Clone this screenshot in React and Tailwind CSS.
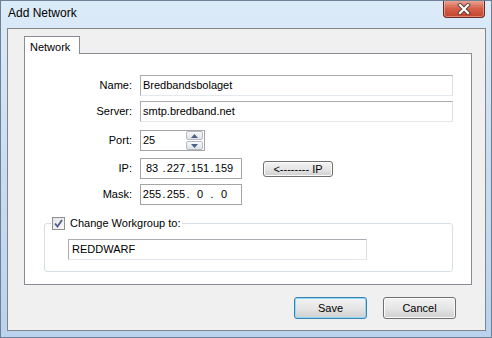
import React from 'react';

const font = { fontFamily: '"Liberation Sans", Arial, sans-serif' };

const Field = ({ value, className = '' }) => (
  <div className={`h-[21px] border border-[#abadb3] border-r-[#dbdfe6] border-b-[#e3e9ef] bg-white flex items-center pl-[2px] text-[11px] text-black ${className}`}>
    {value}
  </div>
);

const Label = ({ children }) => (
  <div className="w-[108px] text-right text-[11px] text-black pr-[1px]">{children}</div>
);

const IpBox = ({ parts }) => (
  <div className="w-[102px] h-[21px] border border-[#a5a5a5] bg-white flex items-center pl-[1px] text-[11px] text-black">
    {parts.map((p, i) => (
      <React.Fragment key={i}>
        {i > 0 && <span className="w-[4px] text-center">.</span>}
        <span className="w-[20px] text-center">{p}</span>
      </React.Fragment>
    ))}
  </div>
);

const Button = ({ children, focused, className = '' }) => (
  <button
    className={`rounded-[3px] border text-[11px] text-black bg-linear-to-b from-[#f3f3f3] via-[#e6e6e6] to-[#cfcfcf] ${
      focused ? 'border-[#3c7fb1] shadow-[inset_0_0_0_1px_#8fdcf8]' : 'border-[#707070] shadow-[inset_0_0_0_1px_#fbfbfb]'
    } ${className}`}
  >
    {children}
  </button>
);

const Spinner = () => (
  <div className="ml-auto mr-[1px] w-[17px] h-[19px] flex flex-col gap-[1px]">
    {[0, 1].map(i => (
      <div key={i} className="flex-1 border border-[#b5bac2] rounded-[2px] bg-linear-to-b from-[#f7f8fa] to-[#dfe3ea] flex items-center justify-center">
        <svg width="7" height="4" viewBox="0 0 7 4">
          {i === 0 ? <path d="M0 4 L3.5 0 L7 4 Z" fill="#4d6185" /> : <path d="M0 0 L3.5 4 L7 0 Z" fill="#4d6185" />}
        </svg>
      </div>
    ))}
  </div>
);

export default function App() {
  return (
    <div
      style={font}
      className="w-[492px] h-[338px] border border-[#6e8093] bg-linear-to-b from-[#dcebf8] via-[#c8ddf2] to-[#b9d3ee] flex flex-col overflow-hidden"
    >
      {/* title bar */}
      <div className="h-[27px] flex items-start justify-between">
        <div className="pl-[7px] pt-[5px] text-[12px] leading-[15px] text-black">Add Network</div>
        <div className="mr-[6px] -mt-px w-[42px] h-[18px] rounded-b-[4px] border border-t-0 border-[#6b2a20] bg-linear-to-b from-[#eaaa9c] via-[#d5604a] to-[#c4432b] flex items-center justify-center shadow-[inset_0_0_0_1px_rgba(255,210,200,0.45)]">
          <svg width="14" height="12" viewBox="0 0 14 12">
            <path d="M3 2 L11 10 M11 2 L3 10" stroke="#5a3a36" strokeWidth="4" strokeLinecap="square" />
            <path d="M3 2 L11 10 M11 2 L3 10" stroke="#ffffff" strokeWidth="2.2" strokeLinecap="square" />
          </svg>
        </div>
      </div>

      {/* client area */}
      <div className="ml-[6px] w-[479px] h-[303px] border border-[#858585] bg-[#f0f0f0] flex flex-col">
        <div className="ml-[16px] mt-[7px] relative z-10 w-[56px] h-[18px] border border-b-0 border-[#898c95] bg-white text-[11px] text-black pl-[5px] pt-[2px]">
          Network
        </div>
        <div className="ml-[16px] -mt-px w-[448px] h-[232px] border border-[#898c95] bg-white flex flex-col">
          <div className="mt-[21px] flex items-center">
            <Label>Name:</Label>
            <Field value="Bredbandsbolaget" className="ml-[7px] w-[313px]" />
          </div>
          <div className="mt-[5px] flex items-center">
            <Label>Server:</Label>
            <Field value="smtp.bredband.net" className="ml-[7px] w-[313px]" />
          </div>
          <div className="mt-[8px] flex items-center">
            <Label>Port:</Label>
            <div className="ml-[7px] w-[65px] h-[21px] border border-[#a5a5a5] bg-white flex items-center pl-[2px] text-[11px] text-black">
              25
              <Spinner />
            </div>
          </div>
          <div className="mt-[7px] flex items-center">
            <Label>IP:</Label>
            <div className="ml-[7px]">
              <IpBox parts={['83', '227', '151', '159']} />
            </div>
            <Button className="ml-[21px] w-[70px] h-[16px] leading-[12px]">&lt;-------- IP</Button>
          </div>
          <div className="mt-[5px] flex items-center">
            <Label>Mask:</Label>
            <div className="ml-[7px]">
              <IpBox parts={['255', '255', '0', '0']} />
            </div>
          </div>

          {/* workgroup group box */}
          <div className="relative mt-[18px] ml-[19px] w-[409px] h-[49px] border border-[#d5dfe5] rounded-[3px]">
            <div className="absolute left-[6px] -top-[8px] flex items-center bg-white pl-px pr-[2px]">
              <div className="w-[13px] h-[13px] border border-[#8f8f8f] bg-linear-to-br from-[#e4e4e4] to-[#f8f8f8] flex items-center justify-center">
                <svg width="9" height="9" viewBox="0 0 9 9">
                  <path d="M1 4.5 L3.5 7.5 L8 1" fill="none" stroke="#4a5f97" strokeWidth="1.8" />
                </svg>
              </div>
              <span className="ml-[5px] text-[11px] text-black leading-[14px]">Change Workgroup to:</span>
            </div>
            <Field value="REDDWARF" className="mt-[15px] ml-[23px] w-[299px] pl-[3px]" />
          </div>
        </div>

        <div className="mt-[12px] ml-[286px] flex gap-[16px]">
          <Button focused className="w-[73px] h-[22px]">Save</Button>
          <Button className="w-[73px] h-[22px]">Cancel</Button>
        </div>
      </div>
    </div>
  );
}
